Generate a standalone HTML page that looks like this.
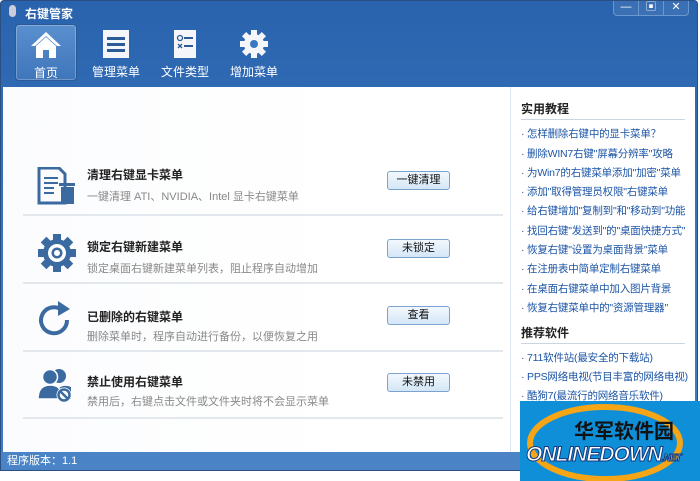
<!DOCTYPE html>
<html><head><meta charset="utf-8"><style>
*{margin:0;padding:0;box-sizing:border-box}
body{width:700px;height:481px;background:#fff;position:relative;overflow:hidden;font-family:"Liberation Sans","Noto Sans CJK SC",sans-serif;font-size:12px}
.win{position:absolute;left:0;top:0;width:698px;height:471px;background:linear-gradient(#2a63ad,#3a78c0 60%,#3d7cc4);border:1px solid #2a4f80;border-radius:4px 4px 0 0}
.title{position:absolute;left:24px;top:4px;color:#fff;font-size:12px;font-weight:bold}
.ctrl{position:absolute;right:8px;top:0;width:76px;height:15px;border:1px solid #6a98d0;border-top:none;border-radius:0 0 4px 4px;background:rgba(255,255,255,.08);color:#fff;font-size:11px;display:flex}
.ctrl span{flex:1;text-align:center;line-height:13px;border-right:1px solid #6a98d0}
.ctrl span:last-child{border:none}
.nav{position:absolute;top:23px;width:62px;height:57px;text-align:center;color:#fff;font-size:12px}
.nav.sel{background:linear-gradient(#5a8fcf,#3f76ba);border:1px solid #2c5a96;border-radius:4px;box-shadow:inset 0 0 0 1px rgba(255,255,255,.25)}
.nav svg{display:block;margin:5px auto 4px}
.main{position:absolute;left:3px;top:87px;width:692px;height:365px;background:linear-gradient(90deg,#fbfcfe,#fff 50%)}
.side{position:absolute;left:507px;top:0;width:185px;height:365px;background:#fff;border-left:1px solid #dde5ef}
.row{position:absolute;left:20px;width:480px;height:66px;border-bottom:2px solid #e3e7ee}
.row .t{position:absolute;left:64px;font-size:12px;font-weight:bold;color:#222}
.row .d{position:absolute;left:64px;font-size:11px;color:#888}
.row svg{position:absolute;left:14px}
.btn{position:absolute;left:364px;width:63px;height:19px;border:1px solid #7aa3cf;border-radius:3px;background:linear-gradient(#f2f8fd,#d4e7f7);font-size:11px;text-align:center;line-height:17px;color:#111}
.h{position:absolute;left:10px;font-weight:bold;font-size:12px;color:#222;width:164px;border-bottom:1px solid #c9d5e3;padding-bottom:2px}
.li{position:absolute;left:10px;font-size:10.5px;color:#1c55a6;white-space:nowrap;letter-spacing:-0.2px}
.status{position:absolute;left:1px;top:452px;width:696px;height:18px;background:#4a84c6;color:#fff;font-size:11px;padding-left:6px;line-height:18px}
.wm{position:absolute;left:520px;top:401px;width:180px;height:80px;background:#0f8fd8;overflow:hidden}
</style></head><body>
<div class="win">
<svg style="position:absolute;left:7px;top:4px" width="9" height="12"><rect x="1" y="0" width="7" height="12" rx="3.5" fill="#ccd"/></svg>
<div class="title">右键管家</div>
<div class="ctrl"><span>—</span><span>▣</span><span>✕</span></div>
<div class="nav sel" style="left:14px"><svg width="32" height="30" viewBox="0 0 32 30"><path d="M16 2 L1 16 L5 16 L16 6 L27 16 L31 16 Z" fill="#fff"/><path d="M6 16 L16 7 L26 16 V28 H19 V20 H13 V28 H6Z" fill="#fff"/></svg>首页</div>
<div class="nav" style="left:84px"><svg width="28" height="30"><rect x="1" y="1" width="26" height="28" fill="#f4f6f9"/><rect x="5" y="8" width="18" height="3" fill="#2c5a96"/><rect x="5" y="14" width="18" height="3" fill="#2c5a96"/><rect x="5" y="20" width="18" height="3" fill="#2c5a96"/></svg>管理菜单</div>
<div class="nav" style="left:153px"><svg width="24" height="30"><rect x="1" y="1" width="22" height="28" fill="#f4f6f9"/><circle cx="7" cy="9" r="2.5" fill="none" stroke="#2c5a96" stroke-width="1.3"/><rect x="11" y="8" width="9" height="2" fill="#2c5a96"/><path d="M5 15 l4 4 M9 15 l-4 4" stroke="#2c5a96" stroke-width="1.3"/><rect x="11" y="16" width="9" height="2" fill="#2c5a96"/></svg>文件类型</div>
<div class="nav" style="left:222px"><svg width="30" height="30" viewBox="-15 -15 30 30"><g fill="#f4f6f9"><circle r="10"/><g id="t"><rect x="-3" y="-14" width="6" height="6"/></g><use href="#t" transform="rotate(45)"/><use href="#t" transform="rotate(90)"/><use href="#t" transform="rotate(135)"/><use href="#t" transform="rotate(180)"/><use href="#t" transform="rotate(225)"/><use href="#t" transform="rotate(270)"/><use href="#t" transform="rotate(315)"/></g><circle r="4" fill="#3a78c0"/></svg>增加菜单</div>
</div>
<div class="main">
<div class="row" style="top:63px"><svg style="top:17px" width="40" height="38"><path d="M2 1 H22 L28 7 V36 H2Z" fill="none" stroke="#3b6aa0" stroke-width="3"/><g fill="#3b6aa0"><rect x="7" y="10" width="14" height="2"/><rect x="7" y="15" width="14" height="2"/><rect x="7" y="20" width="10" height="2"/><rect x="7" y="25" width="10" height="2"/><rect x="22" y="16" width="16" height="3"/><rect x="24" y="20" width="13" height="17"/></g></svg><div class="t" style="top:16px">清理右键显卡菜单</div><div class="d" style="top:38px">一键清理 ATI、NVIDIA、Intel 显卡右键菜单</div><div class="btn" style="top:21px">一键清理</div></div>
<div class="row" style="top:131px"><svg style="top:15px" width="40" height="40" viewBox="-20 -20 40 40"><g fill="#3b6aa0"><circle r="14"/><g id="g"><rect x="-4" y="-19" width="8" height="7"/></g><use href="#g" transform="rotate(45)"/><use href="#g" transform="rotate(90)"/><use href="#g" transform="rotate(135)"/><use href="#g" transform="rotate(180)"/><use href="#g" transform="rotate(225)"/><use href="#g" transform="rotate(270)"/><use href="#g" transform="rotate(315)"/></g><circle r="9" fill="#fff"/><circle r="5.5" fill="#3b6aa0"/><circle r="3" fill="#fff"/></svg><div class="t" style="top:20px">锁定右键新建菜单</div><div class="d" style="top:42px">锁定桌面右键新建菜单列表，阻止程序自动增加</div><div class="btn" style="top:21px">未锁定</div></div>
<div class="row" style="top:199px"><svg style="top:12px" width="36" height="40"><path d="M25 12 A13 13 0 1 0 30 22" fill="none" stroke="#3b6aa0" stroke-width="4"/><path d="M21 3 L33 11 L21 18Z" fill="#3b6aa0"/></svg><div class="t" style="top:22px">已删除的右键菜单</div><div class="d" style="top:42px">删除菜单时，程序自动进行备份，以便恢复之用</div><div class="btn" style="top:20px">查看</div></div>
<div class="row" style="top:266px"><svg style="top:14px" width="38" height="36"><circle cx="22" cy="9" r="7" fill="#3b6aa0"/><path d="M18 32 C18 20 26 17 34 20 V32Z" fill="#3b6aa0"/><circle cx="13" cy="10" r="7.5" fill="#3b6aa0" stroke="#fff" stroke-width="1.5"/><path d="M1 32 C1 20 8 18 13 18 C19 18 25 20 25 32Z" fill="#3b6aa0" stroke="#fff" stroke-width="1.5"/><circle cx="27" cy="28" r="7.5" fill="#fff"/><circle cx="27" cy="28" r="5.5" fill="none" stroke="#3b6aa0" stroke-width="2.5"/><path d="M23 24 L31 32" stroke="#3b6aa0" stroke-width="2.5"/></svg><div class="t" style="top:20px">禁止使用右键菜单</div><div class="d" style="top:40px">禁用后，右键点击文件或文件夹时将不会显示菜单</div><div class="btn" style="top:20px">未禁用</div></div>
<div class="side">
<div class="h" style="top:13px">实用教程</div>
<div class="li" style="top:39px">· 怎样删除右键中的显卡菜单？</div>
<div class="li" style="top:59px">· 删除WIN7右键"屏幕分辨率"攻略</div>
<div class="li" style="top:78px">· 为Win7的右键菜单添加"加密"菜单</div>
<div class="li" style="top:97px">· 添加"取得管理员权限"右键菜单</div>
<div class="li" style="top:116px">· 给右键增加"复制到"和"移动到"功能</div>
<div class="li" style="top:136px">· 找回右键"发送到"的"桌面快捷方式"</div>
<div class="li" style="top:155px">· 恢复右键"设置为桌面背景"菜单</div>
<div class="li" style="top:174px">· 在注册表中简单定制右键菜单</div>
<div class="li" style="top:194px">· 在桌面右键菜单中加入图片背景</div>
<div class="li" style="top:213px">· 恢复右键菜单中的"资源管理器"</div>
<div class="h" style="top:237px">推荐软件</div>
<div class="li" style="top:263px">· 711软件站(最安全的下载站)</div>
<div class="li" style="top:282px">· PPS网络电视(节目丰富的网络电视)</div>
<div class="li" style="top:301px">· 酷狗7(最流行的网络音乐软件)</div>
</div>
</div>
<div class="status">程序版本：1.1</div>
<div class="wm"><svg width="180" height="80" style="position:absolute;left:0;top:0"><ellipse cx="85" cy="42" rx="75" ry="36" fill="none" stroke="#f5a516" stroke-width="6"/></svg>
<div style="position:absolute;left:54px;top:14px;font-size:20px;font-weight:bold;color:#111;font-family:'Noto Sans CJK SC',sans-serif">华军软件园</div>
<div style="position:absolute;left:6px;top:42px;font-size:21px;font-weight:bold;font-style:italic;color:#fff;-webkit-text-stroke:1px #123a80;letter-spacing:-1px">ONLINEDOWN<span style="font-size:10px">.NET</span></div></div>
</body></html>
